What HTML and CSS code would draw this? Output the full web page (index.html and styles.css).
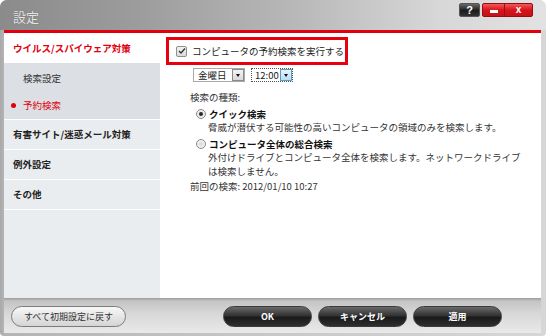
FILE: index.html
```html
<!DOCTYPE html>
<html lang="ja">
<head>
    <meta charset="UTF-8">
    <title>設定</title>
    <link rel="stylesheet" href="styles.css">
</head>
<body>
    <div class="ventana">
        <!-- Barra de título -->
        <div class="titulo">
            <span class="titulo-texto">設定</span>
            <div class="controles">
                <span class="btn-ayuda">?</span>
                <div class="grupo-rojo">
                    <span class="btn-min"><i></i></span>
                    <span class="btn-cerrar">x</span>
                </div>
            </div>
        </div>

        <div class="interior">
            <div class="linea-roja"></div>

            <div class="principal">
                <!-- Menú lateral -->
                <div class="lateral">
                    <div class="item activo">ウイルス/スパイウェア対策</div>
                    <div class="sub">
                        <div class="subitem">検索設定</div>
                        <div class="subitem actual"><span class="punto"></span>予約検索</div>
                    </div>
                    <div class="item">有害サイト/迷惑メール対策</div>
                    <div class="item">例外設定</div>
                    <div class="item">その他</div>
                </div>

                <!-- Contenido -->
                <div class="contenido">
                    <div class="resaltado">
                        <span class="casilla">
                            <svg width="8" height="8" viewBox="0 0 8 8"><path d="M1 4 L3 6 L7 1.5" fill="none" stroke="#333" stroke-width="1.3"/></svg>
                        </span>
                        コンピュータの予約検索を実行する
                    </div>

                    <div class="selectores">
                        <div class="selector dia">
                            <span class="valor">金曜日</span>
                            <span class="flecha"></span>
                        </div>
                        <div class="selector hora">
                            <span class="valor">12:00</span>
                            <span class="flecha azul"></span>
                        </div>
                    </div>

                    <div class="etiqueta">検索の種類:</div>

                    <div class="opcion">
                        <div class="opcion-titulo"><span class="radio marcado"></span>クイック検索</div>
                        <div class="opcion-desc">脅威が潜伏する可能性の高いコンピュータの領域のみを検索します。</div>
                    </div>

                    <div class="opcion">
                        <div class="opcion-titulo"><span class="radio"></span>コンピュータ全体の総合検索</div>
                        <div class="opcion-desc">外付けドライブとコンピュータ全体を検索します。ネットワークドライブ<br>は検索しません。</div>
                    </div>

                    <div class="ultimo">前回の検索: 2012/01/10 10:27</div>
                </div>
            </div>

            <!-- Barra inferior -->
            <div class="pie">
                <button class="btn-claro">すべて初期設定に戻す</button>
                <div class="acciones">
                    <button class="btn-oscuro">OK</button>
                    <button class="btn-oscuro">キャンセル</button>
                    <button class="btn-oscuro">適用</button>
                </div>
            </div>
        </div>
    </div>
</body>
</html>
```

FILE: styles.css
```css
body {
    margin: 0;
    background-color: #ffffff;
    font-family: "Noto Sans CJK JP", "Liberation Sans", sans-serif;
    font-size: 9.5px;
    color: #1a1a1a;
}

.ventana {
    width: 546px;
    height: 336px;
    box-sizing: border-box;
    border-radius: 7px 7px 4px 4px;
    overflow: hidden;
    display: flex;
    flex-direction: column;
    background: linear-gradient(to right, #a9a9a9 0, #b4b4b4 4px, #c8c8c8 50%, #d6d6d6 100%);
}

/* Barra de título */
.titulo {
    height: 30px;
    flex-shrink: 0;
    display: flex;
    justify-content: space-between;
    align-items: flex-start;
    background: linear-gradient(to right, #8b8b8b 0%, #9c9c9c 25%, #b9b9b9 55%, #d7d7d7 80%, #e2e2e2 100%);
}

.titulo-texto {
    margin: 7px 0 0 13px;
    font-size: 13px;
    color: #e6e6e6;
    text-shadow: 0 0 1px #5c5c5c;
}

.controles {
    display: flex;
    gap: 2px;
    margin: 3px 13px 0 0;
}

.btn-ayuda {
    width: 21px;
    height: 14px;
    border-radius: 2px;
    border: 1px solid #555;
    box-sizing: border-box;
    background: linear-gradient(to bottom, #6a6a6a, #1c1c1c 55%, #333);
    color: #ffffff;
    font: bold 11px "Liberation Sans", sans-serif;
    line-height: 12px;
    text-align: center;
}

.grupo-rojo {
    display: flex;
    width: 51px;
    height: 14px;
    border-radius: 2px;
    border: 1px solid #9a0a10;
    box-sizing: border-box;
    overflow: hidden;
    background: linear-gradient(to bottom, #f05a5a, #d8141c 50%, #c2121a);
}

.btn-min {
    width: 21px;
    border-right: 1px solid #a10c12;
    display: flex;
    align-items: center;
    justify-content: center;
}

.btn-min i {
    width: 8px;
    height: 3px;
    margin-top: 2px;
    background-color: #ffffff;
}

.btn-cerrar {
    flex: 1;
    color: #ffffff;
    font: bold 10px "Liberation Sans", sans-serif;
    line-height: 11px;
    text-align: center;
}

/* Interior */
.interior {
    flex: 1;
    display: flex;
    flex-direction: column;
    margin: 0 5px 3px 4px;
}

.linea-roja {
    height: 3px;
    background-color: #e2000f;
    flex-shrink: 0;
}

.principal {
    height: 265px;
    display: flex;
    background-color: #ffffff;
}

/* Menú lateral */
.lateral {
    width: 156px;
    flex-shrink: 0;
    background-color: #eaedef;
}

.item {
    height: 29px;
    line-height: 29px;
    padding-left: 9px;
    border-bottom: 1px solid #ffffff;
    font-weight: bold;
    color: #222222;
}

.item.activo {
    background-color: #ffffff;
    color: #e2000f;
    border-bottom: none;
    height: 30px;
    line-height: 30px;
}

.sub {
    background-color: #dcdfe3;
    padding: 2px 0 1px 0;
    border-bottom: 1px solid #ffffff;
}

.subitem {
    height: 26px;
    line-height: 26px;
    padding-left: 19px;
    color: #333333;
    display: flex;
    align-items: center;
}

.subitem.actual {
    color: #e2000f;
    padding-left: 7px;
    margin-top: 1px;
}

.punto {
    width: 5px;
    height: 5px;
    border-radius: 50%;
    background-color: #e2000f;
    margin-right: 7px;
}

/* Contenido */
.contenido {
    flex: 1;
    padding: 4px 0 0 6px;
}

.resaltado {
    width: 182px;
    height: 28px;
    box-sizing: border-box;
    border: 3px solid #e8000f;
    display: flex;
    align-items: center;
    padding-left: 7px;
    white-space: nowrap;
}

.casilla {
    width: 11px;
    height: 11px;
    box-sizing: border-box;
    border: 1px solid #8e8f8f;
    border-radius: 2px;
    background: linear-gradient(to bottom, #f2f2f2, #dcdcdc);
    display: flex;
    align-items: center;
    justify-content: center;
    margin-right: 5px;
}

.selectores {
    display: flex;
    gap: 6px;
    margin: 3px 0 0 27px;
}

.selector {
    height: 14px;
    box-sizing: border-box;
    border: 1px solid #a9a9a9;
    display: flex;
    align-items: center;
    justify-content: space-between;
    padding-left: 4px;
}

.selector.dia {
    width: 52px;
}

.selector.hora {
    width: 42px;
    border: 1px dotted #555555;
    padding-left: 3px;
}

.valor {
    line-height: 12px;
}

.flecha {
    width: 12px;
    height: 12px;
    box-sizing: border-box;
    border: 1px solid #8a8a8a;
    background: linear-gradient(to bottom, #f4f4f4, #d8d8d8);
    position: relative;
}

.flecha::after {
    content: "";
    position: absolute;
    left: 3px;
    top: 4px;
    border-left: 2.5px solid transparent;
    border-right: 2.5px solid transparent;
    border-top: 3px solid #111111;
}

.flecha.azul {
    background: linear-gradient(to bottom, #e4f4fc, #b6def4);
    border-color: #5e9cc0;
}

.etiqueta {
    margin: 8px 0 0 24px;
    line-height: 14px;
    color: #333333;
}

.opcion {
    margin: 3px 0 0 30px;
    line-height: 14px;
}

.opcion + .opcion {
    margin-top: 3px;
}

.opcion-titulo {
    display: flex;
    align-items: center;
    font-weight: bold;
    color: #111111;
}

.radio {
    width: 10px;
    height: 10px;
    box-sizing: border-box;
    border-radius: 50%;
    border: 1px solid #8a8a8a;
    background: radial-gradient(circle, #d8d8d8 0, #f2f2f2 70%);
    margin-right: 3px;
    position: relative;
}

.radio.marcado::after {
    content: "";
    position: absolute;
    left: 2px;
    top: 2px;
    width: 4px;
    height: 4px;
    border-radius: 50%;
    background-color: #2a2a2a;
}

.opcion-desc {
    padding-left: 12px;
    margin-top: -1px;
    color: #333333;
}

.ultimo {
    margin: 1px 0 0 24px;
    line-height: 14px;
    color: #333333;
}

/* Barra inferior */
.pie {
    flex: 1;
    display: flex;
    align-items: center;
    justify-content: space-between;
    padding: 0 39px 0 7px;
    background: linear-gradient(to bottom, #9c9c9c 0, #c4c4c4 3px, #d8d8d8 45%, #e9e9e9 100%);
}

.acciones {
    display: flex;
    gap: 6px;
}

button {
    font-family: "Noto Sans CJK JP", "Liberation Sans", sans-serif;
    font-size: 9px;
    height: 21px;
    border-radius: 11px;
    padding: 0;
    cursor: pointer;
}

.btn-claro {
    width: 115px;
    margin-top: 2px;
    border: 1px solid #7c7c7c;
    background: linear-gradient(to bottom, #f8f8f8, #e6e6e6 50%, #d4d4d4);
    color: #333333;
}

.btn-oscuro {
    width: 89px;
    margin-top: 2px;
    border: 1px solid #3a3a3a;
    background: linear-gradient(to bottom, #6a6a6a, #333333 45%, #1a1a1a 55%, #2e2e2e);
    color: #ffffff;
    font-weight: bold;
}
```
